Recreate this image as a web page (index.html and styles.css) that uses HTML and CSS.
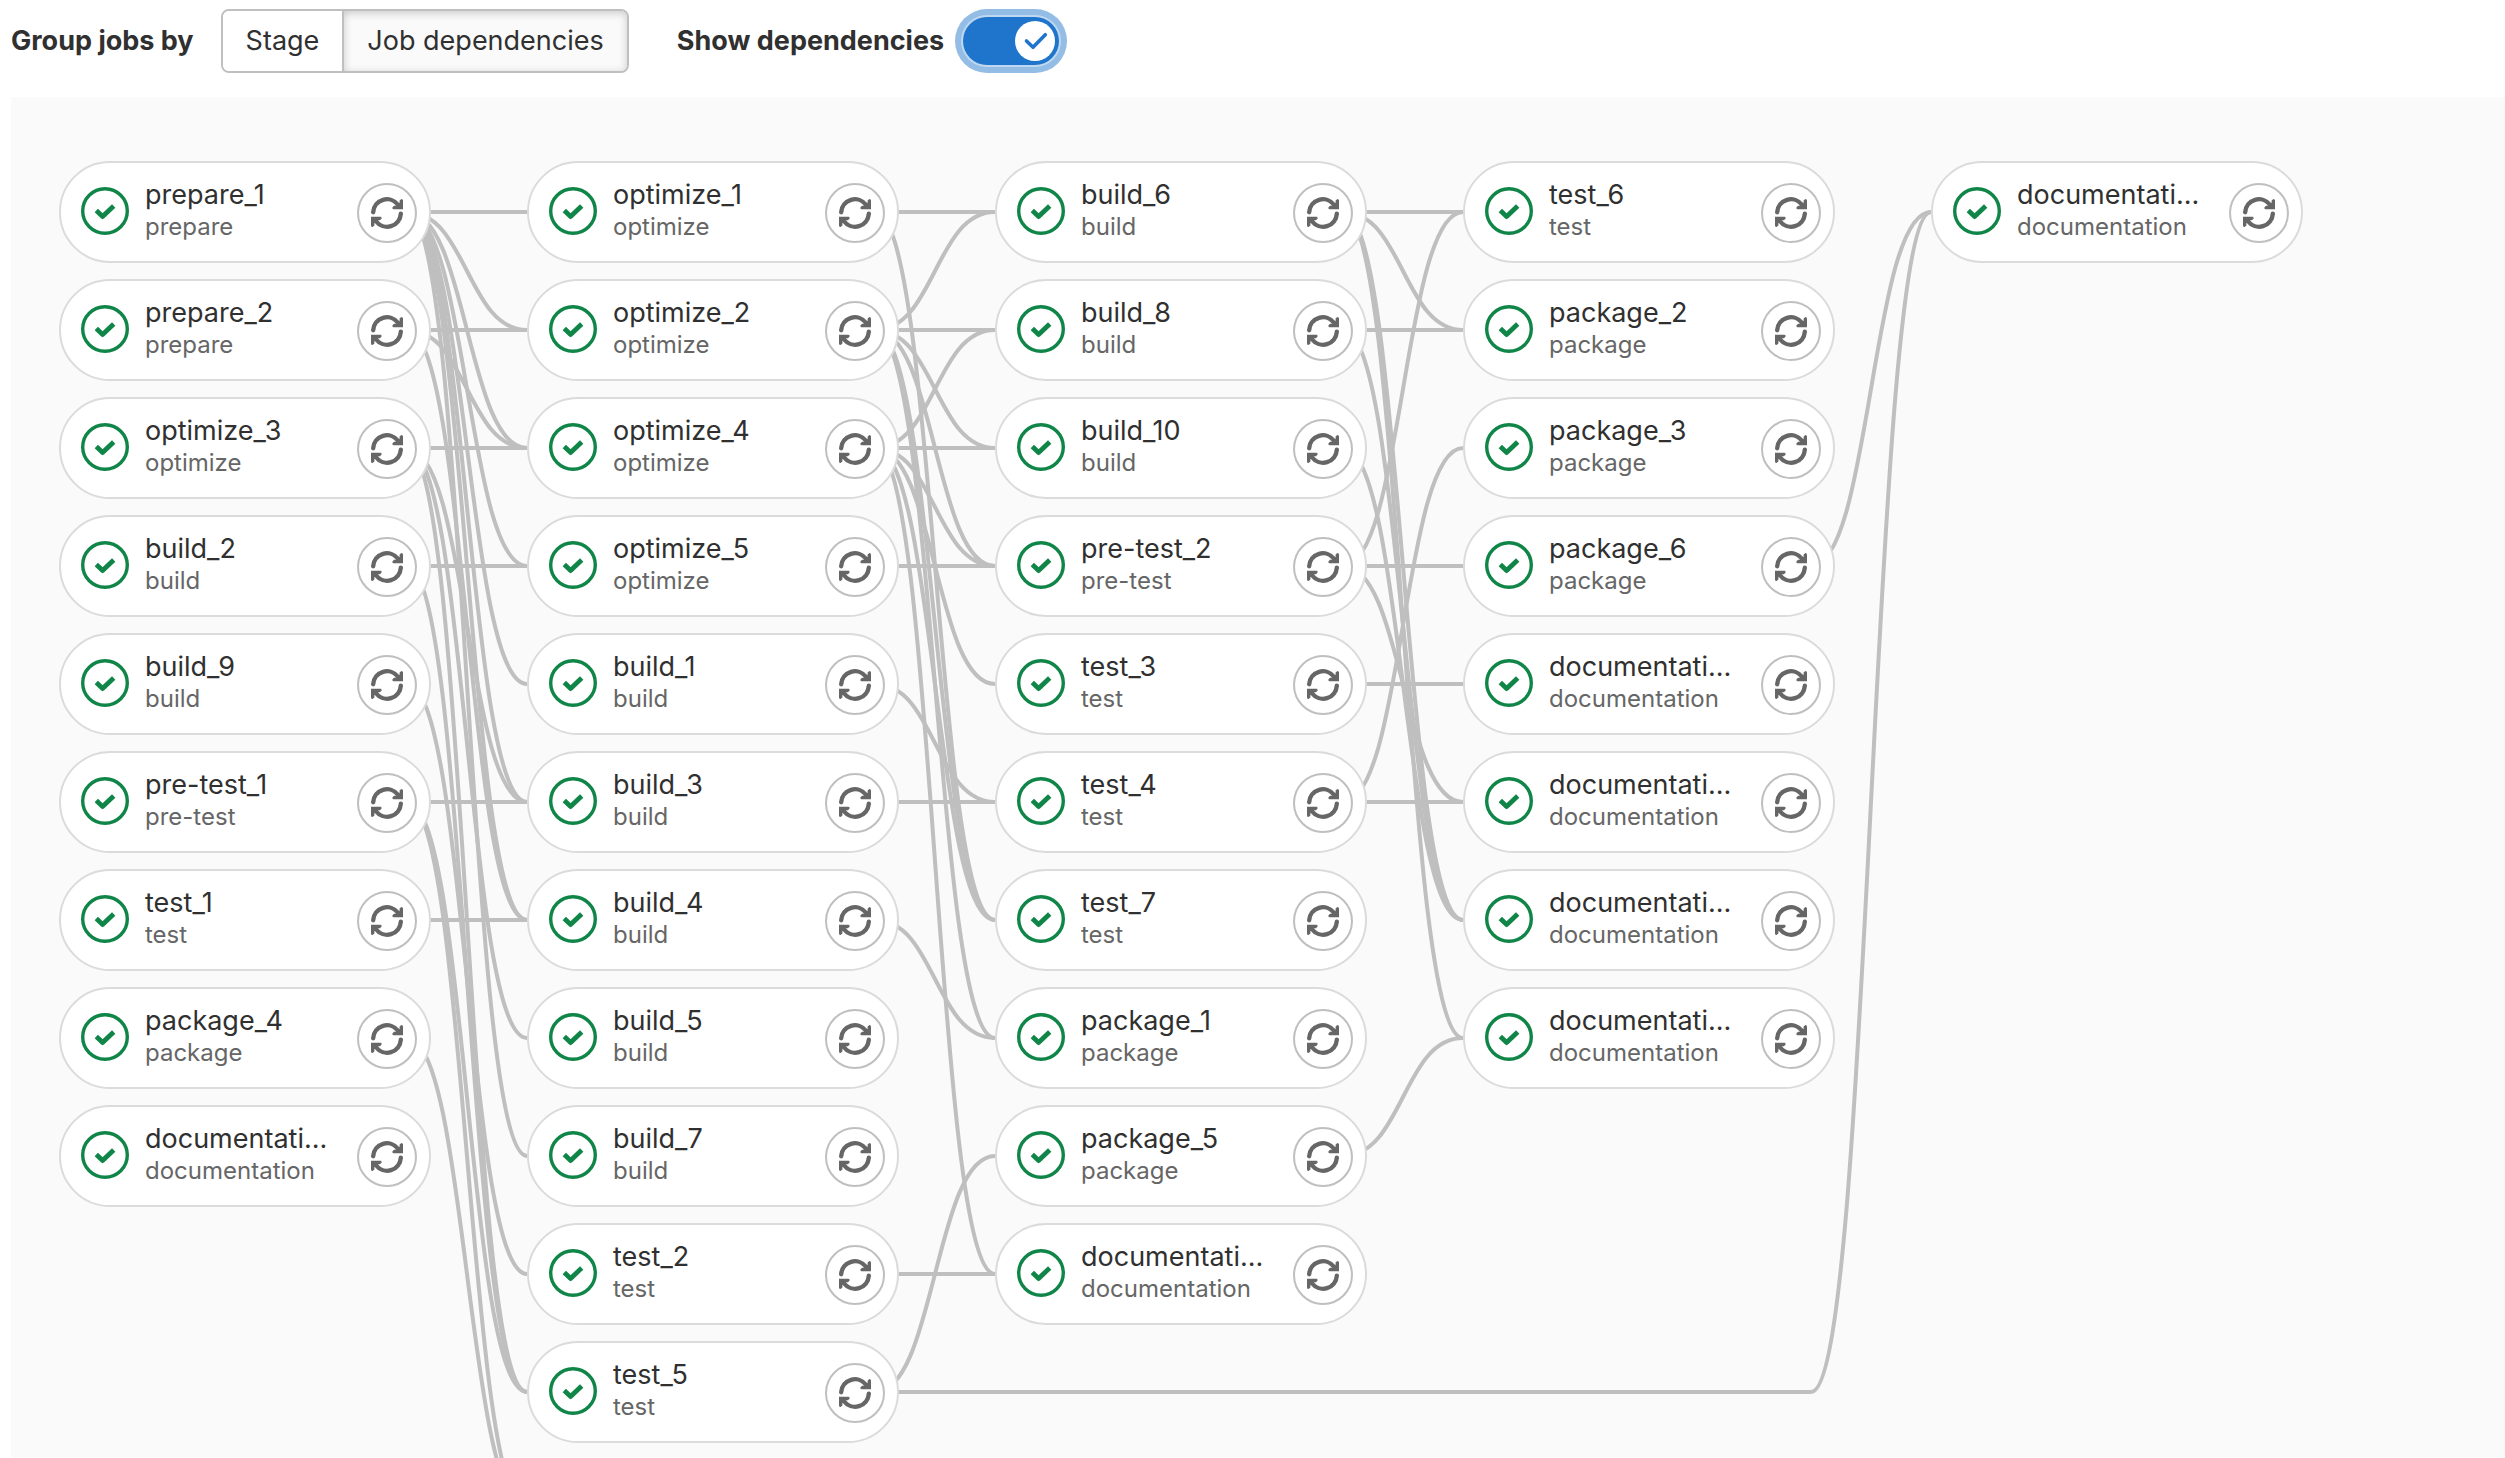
FILE: index.html
```
<!DOCTYPE html>
<html lang="en">
<head>
  <meta charset="utf-8">
  <meta name="viewport" content="width=device-width, initial-scale=1">
  <title>Pipeline job dependencies</title>
  <link rel="stylesheet" href="styles.css">
</head>
<body>
  <svg class="sprite" aria-hidden="true">
    <symbol id="status-success" viewBox="0 0 48 48">
      <circle cx="24" cy="24" r="22.3" fill="none" stroke="currentColor" stroke-width="3.4"/>
      <path d="M15.3 23.6L21.6 29.6L32.7 18.9" fill="none" stroke="currentColor" stroke-width="4.8" stroke-linejoin="round"/>
    </symbol>
    <symbol id="retry" viewBox="0 0 32 32">
      <g id="retry-half">
        <path d="M2.2 15.2A13.8 13.8 0 0 1 27 7.8" fill="none" stroke="currentColor" stroke-width="4.4" stroke-linecap="round"/>
        <path d="M30.4 2Q32 2 32 3.5V12.3H22.6Q21.4 12.3 21.4 11V10.4L23 8.8H25.4L28.6 6V3.6Z" fill="currentColor"/>
      </g>
      <use href="#retry-half" transform="rotate(180 16 16)"/>
    </symbol>
  </svg>

  <header class="toolbar">
    <span class="toolbar-label" id="group-label">Group jobs by</span>
    <div class="segmented" role="group" aria-labelledby="group-label">
      <button class="segment" type="button" aria-pressed="false">Stage</button>
      <button class="segment segment-selected" type="button" aria-pressed="true">Job dependencies</button>
    </div>
    <div class="toggle-field">
      <label class="toolbar-label" for="show-dependencies">Show dependencies</label>
      <span class="toggle">
        <input class="toggle-input" type="checkbox" id="show-dependencies" checked>
        <svg class="toggle-knob" viewBox="0 0 40 40" aria-hidden="true">
          <circle cx="20" cy="20" r="20" fill="#fff"/>
          <path d="M11.5 20L18 26.3L30.3 13.7" fill="none" stroke="#1f75cb" stroke-width="3.6" stroke-linecap="round" stroke-linejoin="round"/>
        </svg>
      </span>
    </div>
  </header>

  <main class="graph" id="graph">
    <svg class="links" id="links" aria-hidden="true"></svg>
  </main>
  <script src="graph.js"></script>
</body>
</html>
```
FILE: styles.css
```
* {
  box-sizing: border-box;
}

body {
  display: flex;
  flex-direction: column;
  height: 100vh;
  margin: 0;
  background: #fff;
  color: #303030;
  font-family: Inter, "Liberation Sans", sans-serif;
  font-size: 27px;
  line-height: 32px;
}

.sprite {
  position: absolute;
  width: 0;
  height: 0;
}

.toolbar {
  display: flex;
  align-items: center;
  padding: 9px 11px 24px;
}

.toolbar-label {
  font-weight: 700;
  white-space: nowrap;
}

.segmented {
  display: flex;
  height: 64px;
  margin-left: 27px;
  border: 2px solid #bfbfbf;
  border-radius: 8px;
  overflow: hidden;
}

.segment {
  padding: 0 23px;
  border: 0;
  background: #fff;
  color: inherit;
  font: inherit;
  white-space: nowrap;
}

.segment-selected {
  border-left: 2px solid #bfbfbf;
  background: #fafafa;
  box-shadow: inset 0 2px 8px rgba(0, 0, 0, 0.2);
}

.toggle-field {
  display: flex;
  align-items: center;
  gap: 19px;
  margin-left: 48px;
}

.toggle {
  position: relative;
  display: flex;
}

.toggle-input {
  appearance: none;
  width: 96px;
  height: 48px;
  margin: 0;
  border-radius: 24px;
  background: #1f75cb;
  box-shadow: 0 0 0 2px #bfd8f1, 0 0 0 8px #94bde6;
}

.toggle-knob {
  position: absolute;
  top: 4px;
  right: 4px;
  width: 40px;
  height: 40px;
  pointer-events: none;
}

.graph {
  position: relative;
  display: flex;
  flex: 1;
  align-items: flex-start;
  gap: 96px;
  min-height: 0;
  margin-left: 11px;
  padding: 64px 48px;
  overflow: hidden;
  background: #fafafa;
}

.links {
  position: absolute;
  inset: 0;
  width: 100%;
  height: 100%;
  fill: none;
  stroke: #bfbfbf;
  stroke-width: 4px;
}

.column {
  position: relative;
  display: flex;
  flex: none;
  flex-direction: column;
  gap: 16px;
  width: 372px;
  margin: 0;
  padding: 0;
  list-style: none;
}

.job {
  display: flex;
  align-items: center;
  gap: 16px;
  height: 102px;
  padding: 0 12px 2px 20px;
  border: 2px solid #dbdbdb;
  border-radius: 51px;
  background: #fff;
}

.job-status {
  flex: none;
  width: 48px;
  height: 48px;
  color: #108548;
}

.job-text {
  flex: 1;
  min-width: 0;
  white-space: nowrap;
}

.job-name,
.job-stage {
  display: block;
}

.job-stage {
  color: #666;
  font-size: 24px;
}

.job-retry {
  display: flex;
  flex: none;
  align-items: center;
  justify-content: center;
  width: 60px;
  height: 60px;
  margin-top: 4px;
  padding: 0;
  border: 2px solid #bfbfbf;
  border-radius: 50%;
  background: #fff;
  color: #666;
}

.job-retry-icon {
  width: 32px;
  height: 32px;
}
```
FILE: graph.js
```
const columns = [
  ['prepare_1:prepare', 'prepare_2:prepare', 'optimize_3:optimize', 'build_2:build', 'build_9:build',
    'pre-test_1:pre-test', 'test_1:test', 'package_4:package', 'documentati...:documentation'],
  ['optimize_1:optimize', 'optimize_2:optimize', 'optimize_4:optimize', 'optimize_5:optimize', 'build_1:build',
    'build_3:build', 'build_4:build', 'build_5:build', 'build_7:build', 'test_2:test', 'test_5:test', ''],
  ['build_6:build', 'build_8:build', 'build_10:build', 'pre-test_2:pre-test', 'test_3:test',
    'test_4:test', 'test_7:test', 'package_1:package', 'package_5:package', 'documentati...:documentation'],
  ['test_6:test', 'package_2:package', 'package_3:package', 'package_6:package',
    'documentati...:documentation', 'documentati...:documentation',
    'documentati...:documentation', 'documentati...:documentation'],
  ['documentati...:documentation'],
];

// For each column: source row -> target rows in the next column.
const links = [
  { 0: [0, 1, 2, 3, 4, 5, 6, 8], 1: [1, 2, 6], 2: [2, 5, 7, 10], 3: [3, 10], 4: [9], 5: [5, 10, 11], 6: [6], 7: [11] },
  { 0: [0, 6], 1: [0, 1, 2, 3, 6, 7], 2: [1, 2, 3, 4, 6, 9], 3: [3], 4: [5], 5: [5], 6: [7], 9: [9], 10: [8] },
  { 0: [0, 1, 6, 7], 1: [1, 6], 2: [6], 3: [0, 3, 5], 4: [4], 5: [2, 5], 8: [7] },
  { 3: [0] },
];

// Links that skip over columns: [source column, source row, target column, target row].
const longLinks = [[1, 10, 4, 0]];

const CURVE = 120;
const graph = document.getElementById('graph');
const linkLayer = document.getElementById('links');

function jobMarkup(entry) {
  if (!entry) return '<li class="job"></li>';
  const [name, stage] = entry.split(':');
  return `<li class="job">
    <svg class="job-status" role="img" aria-label="Passed"><use href="#status-success"/></svg>
    <span class="job-text"><span class="job-name">${name}</span><span class="job-stage">${stage}</span></span>
    <button class="job-retry" type="button" aria-label="Retry ${name}">
      <svg class="job-retry-icon" aria-hidden="true"><use href="#retry"/></svg>
    </button>
  </li>`;
}

const jobs = columns.map((entries) => {
  const list = document.createElement('ul');
  list.className = 'column';
  list.innerHTML = entries.map(jobMarkup).join('');
  graph.append(list);
  return [...list.children];
});

function linkPath(source, target) {
  const origin = graph.getBoundingClientRect();
  const from = source.getBoundingClientRect();
  const to = target.getBoundingClientRect();
  const x1 = from.right - origin.left;
  const y1 = from.top + from.height / 2 - origin.top;
  const x2 = to.left - origin.left;
  const y2 = to.top + to.height / 2 - origin.top;
  const bend = x2 - CURVE;
  const control = x2 - CURVE / 2;
  return `<path d="M${x1} ${y1}L${bend} ${y1}C${control} ${y1} ${control} ${y2} ${x2} ${y2}"/>`;
}

function drawLinks() {
  const paths = [];
  links.forEach((rows, column) => {
    Object.entries(rows).forEach(([row, targets]) => {
      targets.forEach((target) => paths.push(linkPath(jobs[column][row], jobs[column + 1][target])));
    });
  });
  longLinks.forEach(([c1, r1, c2, r2]) => paths.push(linkPath(jobs[c1][r1], jobs[c2][r2])));
  linkLayer.innerHTML = paths.join('');
}

document.getElementById('show-dependencies').addEventListener('change', (event) => {
  linkLayer.style.display = event.target.checked ? '' : 'none';
});
window.addEventListener('resize', drawLinks);
drawLinks();
```
